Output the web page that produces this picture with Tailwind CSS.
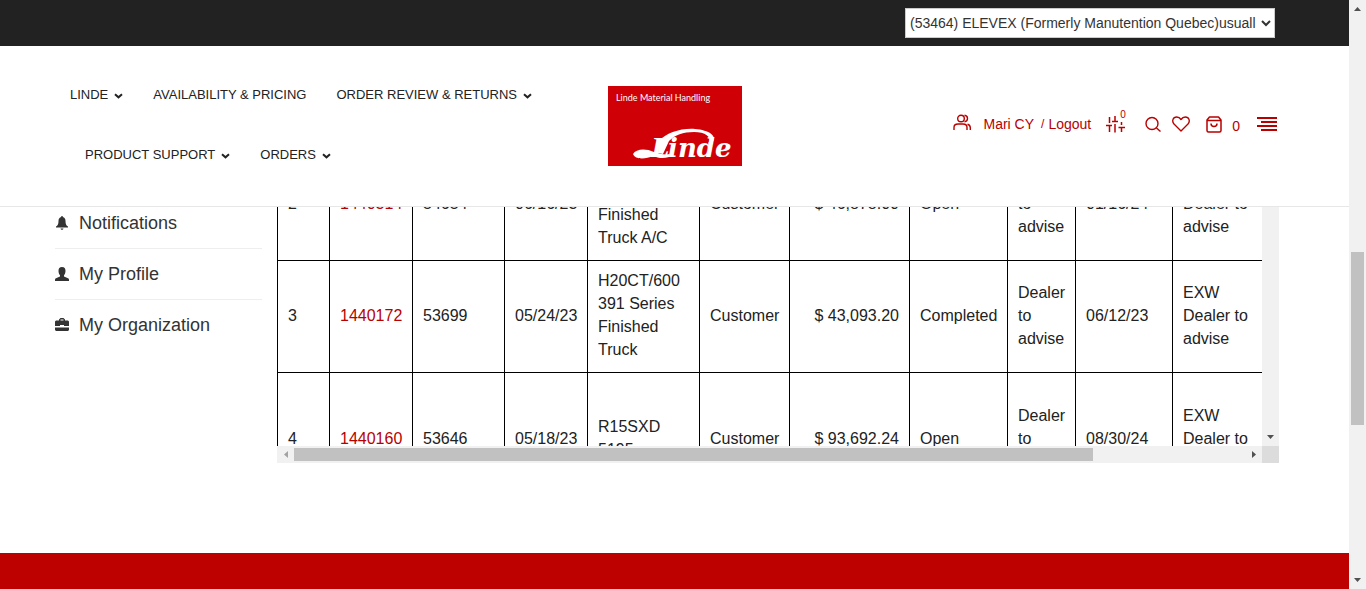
<!DOCTYPE html>
<html lang="en">
<head>
<meta charset="utf-8">
<meta name="viewport" content="width=device-width, initial-scale=1">
<title>Linde Material Handling - Orders</title>
<script src="https://cdn.jsdelivr.net/npm/@tailwindcss/browser@4"></script>
</head>
<body class="flex h-screen overflow-hidden bg-white font-['Liberation_Sans',Arial,sans-serif] text-[#222]">
<svg class="hidden" aria-hidden="true">
  <symbol id="chev" viewBox="0 0 9 6"><path d="M1 1.2 4.5 4.3 8 1.2" fill="none" stroke="currentColor" stroke-width="2"/></symbol>
</svg>

<div class="flex min-w-0 flex-1 flex-col">
  <div class="flex h-[46px] shrink-0 items-start justify-end bg-[#222] pt-2 pr-[74px]">
    <select aria-label="Customer account" class="h-[30px] w-[370px] border border-[#ccc] bg-white text-sm text-[#333]">
      <option>(53464) ELEVEX (Formerly Manutention Quebec)usuall</option>
    </select>
  </div>

  <header class="grid shrink-0 grid-cols-[1fr_auto_1fr] items-center border-b border-[#e7e7e7] py-5">
    <nav class="pl-[70px] text-[13px] whitespace-nowrap">
      <div class="flex h-[60px] items-center gap-[30px] pb-0.5">
        <a href="#" class="flex items-center gap-1.5">LINDE <svg class="mt-0.5 h-1.5 w-[9px]"><use href="#chev"/></svg></a>
        <a href="#">AVAILABILITY &amp; PRICING</a>
        <a href="#" class="flex items-center gap-1.5">ORDER REVIEW &amp; RETURNS <svg class="mt-0.5 h-1.5 w-[9px]"><use href="#chev"/></svg></a>
      </div>
      <div class="flex h-[60px] items-center gap-[30px] pb-0.5 pl-[15px]">
        <a href="#" class="flex items-center gap-1.5">PRODUCT SUPPORT <svg class="mt-0.5 h-1.5 w-[9px]"><use href="#chev"/></svg></a>
        <a href="#" class="flex items-center gap-1.5">ORDERS <svg class="mt-0.5 h-1.5 w-[9px]"><use href="#chev"/></svg></a>
      </div>
    </nav>

    <a href="#" aria-label="Linde home">
      <svg class="block h-20 w-[134px]" viewBox="0 0 134 80">
        <rect width="134" height="80" fill="#d00007"/>
        <text x="8" y="15" fill="#fff" font-family="Lato, sans-serif" font-size="9">Linde Material Handling</text>
        <text y="71" fill="#fff" font-weight="bold" font-style="italic"><tspan x="43" font-family="Liberation Serif, serif" font-size="30">L</tspan><tspan x="60" font-family="DejaVu Serif, serif" font-size="26">inde</tspan></text>
        <path d="M25 68c3-5 12-6 21-2 6 2 11 3 16 2l-1 3c-6 2-11 1-16-1-7 3-18 4-20-2z" fill="#fff"/>
        <path d="M51 55c7-8 22-13 36-12 14 1 23 7 17 14-2 2-5 1-3-1 3-5-4-10-15-10-11 0-19 3-25 9l-6 13-5-1z" fill="#fff"/>
      </svg>
    </a>

    <div class="flex items-center justify-end pr-[72px] pb-1 text-sm text-[#b80000]">
      <a href="#" class="flex items-center gap-3">
        <svg class="mb-1 h-[17px] w-[18px]" viewBox="0 0 18 17" fill="none" stroke="currentColor" stroke-width="1.4"><circle cx="8" cy="4.5" r="3.3"/><path d="M1 16v-2.500c0-2.500 1.500-3.500 4-3.500h5c2.500 0 4 1 4 3.500V16M11.500 1.300c4 .4 4 6 0 6.400M14.500 10.300c2 .5 2.800 1.500 2.800 3.500V16"/></svg>
        Mari CY</a>
      <a href="#" class="ml-[7px] flex items-center gap-1"><span class="text-xs">/</span>Logout</a>
      <a href="#" aria-label="Compare" class="relative ml-[15px]">
        <svg class="h-[18px] w-[19px]" viewBox="0 0 19 18" fill="none" stroke="currentColor" stroke-width="1.5"><path d="M3.500 2v6M0 10.500h6M3.500 10.500V17M9 1v5M6 6.500h6M9 9v8.500M15.500 7v3M12.500 12.500H19M15.500 12.500V17"/></svg>
        <span class="absolute -top-2 left-[14px] text-[10px] leading-4">0</span>
      </a>
      <button aria-label="Search" class="ml-5"><svg class="block size-4" viewBox="0 0 16 16" fill="none" stroke="currentColor" stroke-width="1.4"><circle cx="7" cy="7.500" r="6"/><path d="m11.500 12 4 3.500"/></svg></button>
      <a href="#" aria-label="Wish list" class="ml-[11px]"><svg class="block h-4 w-[18px]" viewBox="0 0 18 16" fill="none" stroke="currentColor" stroke-width="1.4" stroke-linejoin="round"><path d="M9 15 2 8C-.5 5 1 1 4.700 1 6.800 1 8 2 9 3.500 10 2 11.200 1 13.300 1 17 1 18.500 5 16 8z"/></svg></a>
      <a href="#" class="ml-4 flex items-center gap-2.5"><svg class="h-[17px] w-4" viewBox="0 0 16 17" fill="none" stroke="currentColor" stroke-width="1.500" stroke-linejoin="round"><path d="M3.500 1h9L15 4v10.500c0 1-.5 1.500-1.500 1.500h-11C1.500 16 1 15.500 1 14.500V4zM1 4.500h14M5 7.500c0 4 6 4 6 0"/></svg><span class="pt-1">0</span></a>
      <button aria-label="Menu" class="ml-[17px]"><svg class="block h-[14px] w-5" viewBox="0 0 20 14" fill="currentColor" shape-rendering="crispEdges"><path d="M0 0h20v2H0zM4 4h16v2H4zM0 8h20v2H0zM4 12h16v2H4z"/></svg></button>
    </div>
  </header>

  <main class="flex shrink-0 items-start gap-[15px] overflow-hidden pr-[70px] pb-[90px] pl-[55px]">
    <aside class="-mt-[9px] w-[207px] shrink-0 text-lg text-[#333]">
      <a href="#" class="flex h-[51px] items-center gap-2.5 border-b border-[#eee]">
        <svg class="size-3.5" viewBox="0 0 14 14" fill="currentColor"><path d="M6.300 1V0h1.400v1c2 .5 2.800 2 2.800 4 0 3 .7 4.500 2.500 5.500v1H1v-1C2.800 9.500 3.500 8 3.500 5c0-2 .8-3.500 2.800-4zM5.500 12.500h3c-.3 1.700-2.700 1.700-3 0z"/></svg>Notifications</a>
      <a href="#" class="flex h-[51px] items-center gap-2.5 border-b border-[#eee]">
        <svg class="size-3.5" viewBox="0 0 14 14" fill="currentColor"><path d="M7 0c2.500 0 3.500 1.600 3.500 4 0 2-.7 3.300-1.500 4.300v1.200l4 1.700c.7.300 1 .8 1 1.500V14H0v-1.300c0-.7.3-1.200 1-1.500l4-1.700V8.300C4.200 7.300 3.500 6 3.500 4 3.500 1.600 4.500 0 7 0z"/></svg>My Profile</a>
      <a href="#" class="flex h-[50px] items-center gap-2.5">
        <svg class="size-3.5" viewBox="0 0 14 14" fill="currentColor"><path fill-rule="evenodd" d="M4 2.500V1.500L5.500 0h3L10 1.500v1h3l1 1V8H9V7H5v1H0V3.500l1-1zM5.500 2.500h3v-1h-3zM0 9.500h14V12l-1 1H1l-1-1z"/></svg>My Organization</a>
    </aside>

    <div class="grid min-w-0 flex-1 grid-cols-[1fr_17px]">
      <div class="h-[239px] overflow-hidden">
        <table class="-mt-[59px] w-[1250px] table-fixed border-collapse text-base leading-[23px] [&_td]:border [&_td]:border-black [&_td]:px-[10px] [&_td]:pt-2 [&_td]:pb-[11px]">
          <colgroup><col class="w-[52px]"><col class="w-[83px]"><col class="w-[92px]"><col class="w-[83px]"><col class="w-[112px]"><col class="w-[90px]"><col class="w-[120px]"><col class="w-[98px]"><col class="w-[68px]"><col class="w-[97px]"><col class="w-[112px]"><col></colgroup>
          <tbody>
            <tr class="h-[112px]"><td>2</td><td><a href="#" class="text-[#b80000]">1440314</a></td><td>54654</td><td>06/16/23</td><td>H25CT<br>391 Series<br>Finished<br>Truck A/C</td><td>Customer</td><td class="text-right">$ 46,878.00</td><td>Open</td><td>Dealer<br>to<br>advise</td><td>01/16/24</td><td>EXW<br>Dealer to<br>advise</td><td></td></tr>
            <tr class="h-[112px]"><td>3</td><td><a href="#" class="text-[#b80000]">1440172</a></td><td>53699</td><td>05/24/23</td><td>H20CT/600<br>391 Series<br>Finished<br>Truck</td><td>Customer</td><td class="text-right">$ 43,093.20</td><td>Completed</td><td>Dealer<br>to<br>advise</td><td>06/12/23</td><td>EXW<br>Dealer to<br>advise</td><td></td></tr>
            <tr class="h-[134px]"><td>4</td><td><a href="#" class="text-[#b80000]">1440160</a></td><td>53646</td><td>05/18/23</td><td>R15SXD<br>5195</td><td>Customer</td><td class="text-right">$ 93,692.24</td><td>Open</td><td>Dealer<br>to<br>advise</td><td>08/30/24</td><td>EXW<br>Dealer to<br>advise</td><td></td></tr>
          </tbody>
        </table>
      </div>
      <div class="flex items-end justify-center bg-[#f1f1f1] pb-[7px]"><svg class="h-1 w-[7px]" viewBox="0 0 7 4"><path d="M0 0h7L3.500 4z" fill="#505050"/></svg></div>
      <div class="flex h-[17px] items-center bg-[#f1f1f1]">
        <div class="flex w-[17px] shrink-0 justify-center"><svg class="h-[7px] w-1" viewBox="0 0 4 7"><path d="M4 0v7L0 3.500z" fill="#a3a3a3"/></svg></div>
        <div class="min-w-0 flex-1"><div class="h-[13px] w-[84%] bg-[#c1c1c1]"></div></div>
        <div class="flex w-[17px] shrink-0 justify-center"><svg class="h-[7px] w-1" viewBox="0 0 4 7"><path d="M0 0v7l4-3.500z" fill="#505050"/></svg></div>
      </div>
      <div class="bg-[#dcdcdc]"></div>
    </div>
  </main>

  <footer class="flex-1 bg-[#bd0000]"></footer>
</div>

<div class="flex w-[17px] shrink-0 flex-col items-center justify-between bg-[#f1f1f1] py-[7px]">
  <svg class="h-1 w-[7px]" viewBox="0 0 7 4"><path d="M0 4h7L3.500 0z" fill="#505050"/></svg>
  <div class="flex w-full flex-1 flex-col items-center">
    <div class="flex-[241]"></div>
    <div class="w-[13px] flex-[173] bg-[#c1c1c1]"></div>
    <div class="flex-[153]"></div>
  </div>
  <svg class="h-1 w-[7px]" viewBox="0 0 7 4"><path d="M0 0h7L3.500 4z" fill="#505050"/></svg>
</div>
</body>
</html>
